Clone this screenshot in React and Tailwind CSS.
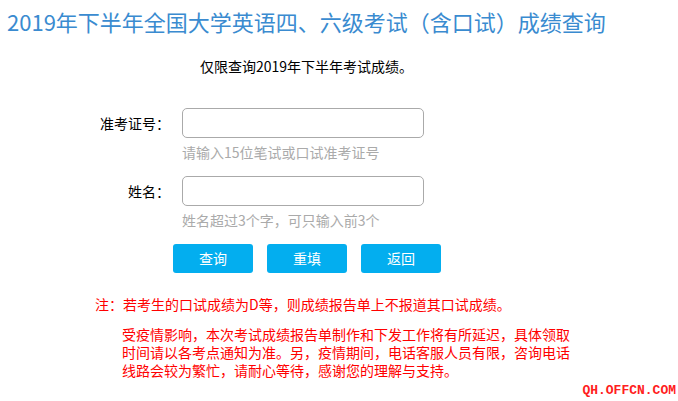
const font = { fontFamily: '"Microsoft YaHei", "Noto Sans CJK SC", sans-serif' };

export default function App() {
  return (
    <div
      className="relative h-[401px] w-[678px] overflow-hidden bg-white text-[14px] text-black font-['Noto_Sans_CJK_SC',sans-serif]"
    >
      <h1 className="pl-[7px] pt-[6px] text-[22px] leading-[30px] font-normal text-[#3a8bd0]">
        2019年下半年全国大学英语四、六级考试（含口试）成绩查询
      </h1>

      <p className="mt-[20px] pl-[200px] leading-[20px]">仅限查询2019年下半年考试成绩。</p>

      <form className="mt-[32px]">
        <div className="grid grid-cols-[170px_242px] gap-x-[12px]">
          <label className="flex h-[30px] items-center justify-end">准考证号：</label>
          <input type="text" className="h-[30px] rounded-[5px] border border-[#aaa] px-2 outline-none" />
          <div />
          <span className="mt-[4px] leading-[20px] text-[#aaa]">请输入15位笔试或口试准考证号</span>

          <label className="mt-[14px] flex h-[30px] items-center justify-end">姓名：</label>
          <input type="text" className="mt-[14px] h-[30px] rounded-[5px] border border-[#aaa] px-2 outline-none" />
          <div />
          <span className="mt-[4px] leading-[20px] text-[#aaa]">姓名超过3个字，可只输入前3个</span>
        </div>

        <div className="mt-[14px] flex gap-[14px] pl-[173px]">
          <button type="button" className="h-[29px] w-[80px] rounded-[3px] bg-[#03aeef] text-white">查询</button>
          <button type="button" className="h-[29px] w-[80px] rounded-[3px] bg-[#03aeef] text-white">重填</button>
          <button type="button" className="h-[29px] w-[80px] rounded-[3px] bg-[#03aeef] text-white">返回</button>
        </div>
      </form>

      <p className="mt-[21px] pl-[95px] leading-[20px] text-[#ff0000]">
        注：若考生的口试成绩为D等，则成绩报告单上不报道其口试成绩。
      </p>
      <p className="mt-[11px] ml-[122px] w-[450px] leading-[18px] text-[#ff0000]">
        受疫情影响，本次考试成绩报告单制作和下发工作将有所延迟，具体领取时间请以各考点通知为准。另，疫情期间，电话客服人员有限，咨询电话线路会较为繁忙，请耐心等待，感谢您的理解与支持。
      </p>

      <span className="absolute right-[2px] top-[383px] font-['Liberation_Mono',monospace] text-[13px] leading-[16px] font-bold text-[#ff2020]">
        QH.OFFCN.COM
      </span>
    </div>
  );
}
